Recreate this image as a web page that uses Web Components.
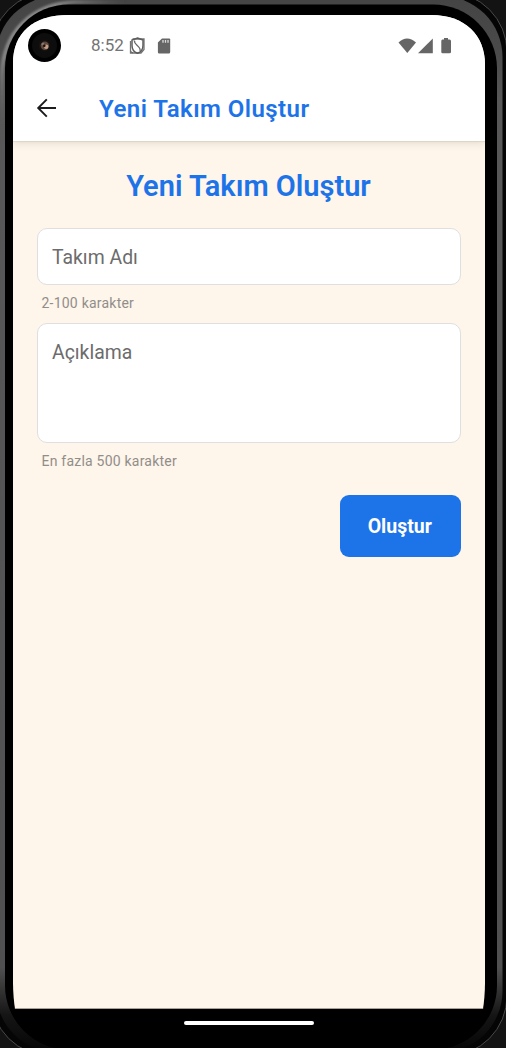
<!DOCTYPE html>
<html lang="tr">
<head>
<meta charset="utf-8">
<title>Yeni Takım Oluştur</title>
<style>
html,body{margin:0;width:506px;height:1048px;overflow:hidden;background:#111}
body{font-family:Roboto,"Noto Sans",sans-serif}
</style>
</head>
<body>
<phone-frame>
  <status-bar slot="screen">8:52</status-bar>
  <app-bar slot="screen">Yeni Takım Oluştur</app-bar>
  <team-form slot="screen"></team-form>
</phone-frame>
<script>
function define(name, html){
  const template=document.createElement('template');
  template.innerHTML=html;
  customElements.define(name,class extends HTMLElement{
    constructor(){
      super();
      this.attachShadow({mode:'open'}).append(template.content.cloneNode(true));
    }
  });
}

define('phone-frame',`
<style>
:host{display:block;position:relative;box-sizing:border-box;width:506px;height:1048px;padding:15px 21px 0 13px;overflow:hidden}
.bezel{position:absolute;inset:0}
.screen{position:relative;display:flex;flex-direction:column;height:994px;background:#fef5eb;clip-path:path('M0 48C0 18 20 0 56 0H418C452 0 472 20 472 50V968C472 978 471 987 470 994H2C1 987 0 978 0 968Z')}
.screen::after{content:"";position:absolute;left:0;right:0;bottom:0;height:1px;background:#aaa298}
.nav{display:flex;justify-content:center;padding:12px 0 0;position:relative}
.nav i{width:130px;height:4px;border-radius:2px;background:#fff}
</style>
<svg class="bezel" width="506" height="1048" viewBox="0 0 506 1048">
  <defs>
    <linearGradient id="rim" x1="0" y1="0" x2="0" y2="1"><stop offset="0" stop-color="#444"/><stop offset=".05" stop-color="#4a4a4a"/><stop offset=".1" stop-color="#585858"/><stop offset=".92" stop-color="#505050"/><stop offset=".965" stop-color="#151515"/><stop offset="1" stop-color="#050505"/></linearGradient>
    <radialGradient id="shine" gradientUnits="userSpaceOnUse" cx="16" cy="16" r="110"><stop offset="0" stop-color="#8c8c8c"/><stop offset=".4" stop-color="#858585"/><stop offset="1" stop-color="#666" stop-opacity="0"/></radialGradient>
    <filter id="soft" x="-20%" y="-20%" width="140%" height="140%"><feGaussianBlur stdDeviation="1"/></filter>
  </defs>
  <rect width="506" height="1048" fill="#131313"/>
  <rect x="-9" y="-8" width="516" height="1064" rx="60" fill="#050505" stroke="#4a4a4a"/>
  <rect x="-4" y="-4" width="506.500" height="1056" rx="61" fill="url(#rim)"/>
  <path d="M2 130V75C3 32 32 4 75 2H130" fill="none" stroke="url(#shine)" stroke-width="4" filter="url(#soft)"/>
  <rect x="5" y="4.500" width="492" height="1045" rx="64" fill="#000"/>
</svg>
<div class="screen"><slot name="screen"></slot></div>
<div class="nav"><i></i></div>
`);

define('camera-hole',`
<style>:host{display:block;width:33px;height:33px}svg{display:block}</style>
<svg width="33" height="33" viewBox="0 0 33 33">
  <circle cx="16.5" cy="16.5" r="16.5" fill="#000"/><circle cx="16.5" cy="16.5" r="12.5" fill="#0d0d0d"/>
  <circle cx="16.5" cy="16.5" r="6" fill="#15110f"/><circle cx="16.8" cy="16.8" r="4.200" fill="#5c483d"/>
  <circle cx="18.2" cy="17.8" r="2.200" fill="#c39d86"/><circle cx="15" cy="15.2" r="1.4" fill="#8e7565"/><circle cx="16.300" cy="16.800" r="1.300" fill="#17100d"/>
</svg>
`);

define('status-bar',`
<style>
:host{display:flex;align-items:center;flex:none;position:relative;z-index:1;box-sizing:border-box;height:61px;padding-left:15px;background:#fff;color:#747474;font-size:17px}
.time{margin:0 0 1px 30px;width:38px;line-height:20px;white-space:nowrap}
svg{display:block;flex:none}
.right{margin-left:auto;padding-right:33px}
</style>
<camera-hole></camera-hole>
<span class="time"><slot></slot></span>
<svg width="44" height="18" viewBox="0 0 44 18" fill="none">
  <path d="M3.5 2H15V12.5L12 16H1.5V4" stroke="#737373" stroke-width="1.3"/>
  <path d="M8.5 1L14 3V8.5C14 12.5 11.5 15.2 8.5 16.2C5.500 15.200 3 12.500 3 8.500V3Z" stroke="#5d5d5d" stroke-width="1.5"/>
  <path d="M5.500 3.500C4.500 8 12.500 9 11 14M1.500 14.500L4 16" stroke="#666" stroke-width="1.3"/>
  <path d="M33 1.500H40.200Q41.200 1.500 41.200 2.500V15Q41.200 16.500 39.700 16.500H30.200Q28.900 16.500 28.900 15V5.500Z" fill="#666"/>
  <path d="M34 3V5.700M36.500 3V5.700M39 3V5.700" stroke="#ddd" stroke-width="1.300"/>
</svg>
<svg class="right" width="54" height="18" viewBox="0 0 54 18" fill="#666">
  <path d="M.5 5.500Q9 -2.300 18 5.500L9.300 16Z"/>
  <path d="M34.800 1.500V16.300H20Z"/>
  <path d="M46 1H50V2.500H51.500Q53 2.500 53 4V15Q53 16.300 51.500 16.300H44.500Q43.300 16.300 43.300 15V4Q43.300 2.500 44.500 2.500H46Z"/>
</svg>
`);

define('app-bar',`
<style>
:host{display:flex;align-items:center;flex:none;box-sizing:border-box;position:relative;height:65px;padding:0 0 0 22px;background:#fff;box-shadow:0 1px 1px #44443018,0 2px 8px #55553026}
svg{display:block;flex:none;margin-bottom:2px}
h1{margin:1px 0 0 40px;font-size:24px;line-height:30px;font-weight:600;letter-spacing:.45px;color:#1d73e8;white-space:nowrap}
</style>
<svg width="24" height="24" viewBox="0 0 24 24" fill="none" stroke="#1c1c1e" stroke-width="1.900"><path d="M21 12H3.500M11.800 3.400L3.200 12L11.800 20.600"/></svg>
<h1><slot></slot></h1>
`);

define('form-field',`
<style>
:host{display:block}
.box{box-sizing:border-box;height:var(--box-height,57px);border:1px solid #dfdfe1;border-radius:10px;background:#fff;padding:15px 14.500px 0;font-size:19.400px;line-height:28px;color:#6c6c6c}
.hint{margin:10px 0 0 5px;font-size:14px;line-height:16px;letter-spacing:.22px;color:#918e8a}
</style>
<div class="box"><slot></slot></div>
<div class="hint"><slot name="hint"></slot></div>
`);

define('action-button',`
<style>
:host{display:block}
button{display:block;width:120.500px;height:62px;padding:2px 1px 0 0;border:0;border-radius:9px;background:#1d73e8;color:#fff;font:700 19.500px/24px Roboto,sans-serif}
</style>
<button type="button"><slot></slot></button>
`);

define('team-form',`
<style>
:host{display:flex;flex-direction:column;padding:27px 24.500px 0 23.500px}
h2{margin:0;font-size:29px;line-height:36px;text-align:center;font-weight:600;color:#1d73e8;white-space:nowrap}
.name{margin-top:24px}
.about{margin-top:12px;--box-height:120px}
action-button{margin:25.600px 0 0;align-self:flex-end}
</style>
<h2>Yeni Takım Oluştur</h2>
<form-field class="name">Takım Adı<span slot="hint">2-100 karakter</span></form-field>
<form-field class="about">Açıklama<span slot="hint">En fazla 500 karakter</span></form-field>
<action-button>Oluştur</action-button>
`);
</script>
</body>
</html>
